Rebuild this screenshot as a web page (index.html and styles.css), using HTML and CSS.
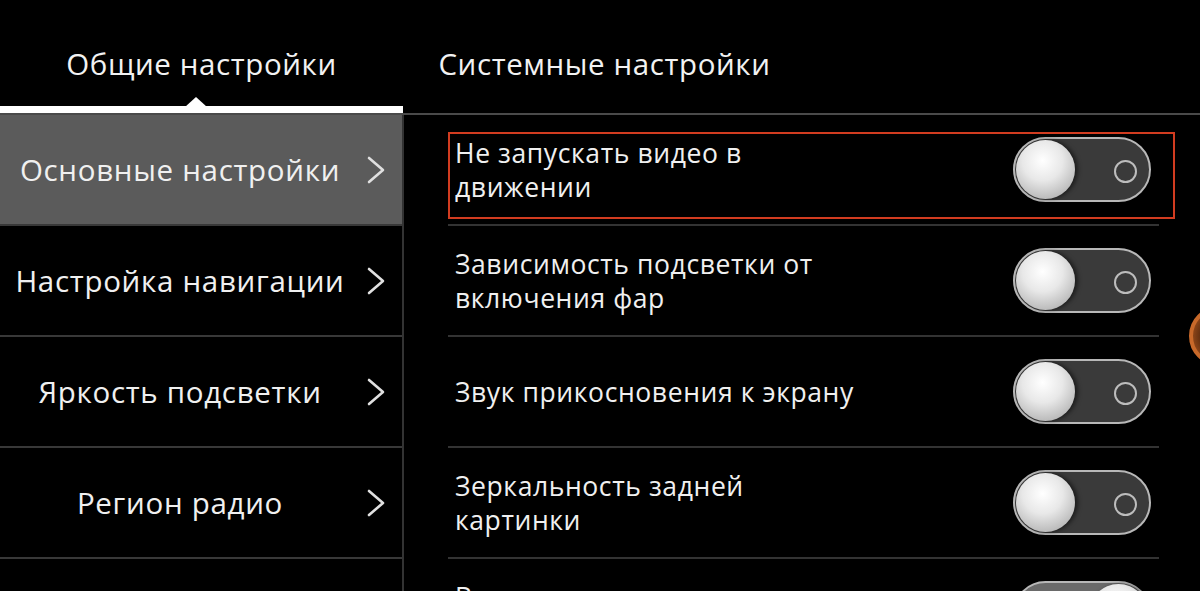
FILE: index.html
```html
<!DOCTYPE html>
<html lang="ru">
<head>
  <meta charset="UTF-8" />
  <title>Настройки</title>
  <link rel="stylesheet" href="styles.css">
</head>
<body>

<div class="app">
  <header class="tabs">
    <div class="tab active">Общие настройки</div>
    <div class="tab">Системные настройки</div>
  </header>

  <div class="content">
    <nav class="menu">
      <div class="menu-item selected">
        <span class="label">Основные настройки</span>
        <svg class="chev" viewBox="0 0 20 30"><polyline points="3,3 17,15 3,27" /></svg>
      </div>
      <div class="menu-item">
        <span class="label">Настройка навигации</span>
        <svg class="chev" viewBox="0 0 20 30"><polyline points="3,3 17,15 3,27" /></svg>
      </div>
      <div class="menu-item">
        <span class="label">Яркость подсветки</span>
        <svg class="chev" viewBox="0 0 20 30"><polyline points="3,3 17,15 3,27" /></svg>
      </div>
      <div class="menu-item">
        <span class="label">Регион радио</span>
        <svg class="chev" viewBox="0 0 20 30"><polyline points="3,3 17,15 3,27" /></svg>
      </div>
      <div class="menu-item"></div>
    </nav>

    <section class="options">
      <div class="option focused">
        <div class="option-text">Не запускать видео в<br>движении</div>
        <span class="toggle"></span>
      </div>
      <div class="option">
        <div class="option-text">Зависимость подсветки от<br>включения фар</div>
        <span class="toggle"></span>
      </div>
      <div class="option">
        <div class="option-text">Звук прикосновения к экрану</div>
        <span class="toggle"></span>
      </div>
      <div class="option">
        <div class="option-text">Зеркальность задней<br>картинки</div>
        <span class="toggle"></span>
      </div>
      <div class="option">
        <div class="option-text">Включать камеру заднего<br>вида</div>
        <span class="toggle on"></span>
      </div>
    </section>
  </div>

  <div class="float-btn"></div>
</div>

</body>
</html>
```

FILE: styles.css
```css
* { box-sizing: border-box; }
body {
  margin: 0;
  background: #000;
  color: #f0f0f0;
  font-family: 'Open Sans', 'Noto Sans', sans-serif;
  overflow: hidden;
}

.app {
  position: relative;
  width: 1200px;
  height: 591px;
  overflow: hidden;
}

.tabs {
  display: flex;
  height: 115px;
  border-bottom: 2px solid #4a4a4a;
}

.tab {
  position: relative;
  width: 403px;
  display: flex;
  align-items: center;
  justify-content: center;
  padding-top: 13px;
  font-size: 29.5px;
  letter-spacing: 0.6px;
  color: #f2f2f2;
}

.tab.active::after {
  content: '';
  position: absolute;
  left: 0;
  right: 0;
  bottom: 0;
  height: 7px;
  background: #fff;
}

.tab.active::before {
  content: '';
  position: absolute;
  left: 185px;
  bottom: 6px;
  border-left: 11px solid transparent;
  border-right: 11px solid transparent;
  border-bottom: 10px solid #fff;
}

.content {
  display: flex;
}

.menu {
  width: 404px;
  border-right: 2px solid #333;
}

.menu-item {
  display: flex;
  align-items: center;
  height: 111px;
  border-bottom: 2px solid #383838;
}

.menu-item.selected {
  background: #5b5b5b;
}

.menu-item .label {
  width: 360px;
  text-align: center;
  font-size: 29.5px;
  letter-spacing: 0.7px;
  color: #f0f0f0;
}

.chev {
  width: 20px;
  height: 30px;
  margin-left: 6px;
  fill: none;
  stroke: #e0e0e0;
  stroke-width: 2.6;
  stroke-linecap: round;
  stroke-linejoin: round;
}

.options {
  padding-left: 44px;
}

.option {
  position: relative;
  display: flex;
  align-items: center;
  justify-content: space-between;
  width: 711px;
  height: 111px;
  padding: 0 8px 0 7px;
  border-bottom: 2px solid #333;
}

.option.focused::after {
  content: '';
  position: absolute;
  left: 0;
  right: -16px;
  top: 17px;
  bottom: 5px;
  border: 2px solid #d23c20;
}

.option-text {
  font-size: 26.5px;
  line-height: 34px;
  letter-spacing: 0.6px;
  color: #f0f0f0;
}

.toggle {
  position: relative;
  flex: none;
  width: 138px;
  height: 65px;
  border: 2px solid #b8b8b8;
  border-radius: 33px;
  background: #3a3a3a;
}

.toggle::before {
  content: '';
  position: absolute;
  left: 1px;
  top: 1px;
  width: 59px;
  height: 59px;
  border-radius: 50%;
  background: radial-gradient(circle at 45% 35%, #ffffff 0%, #e8e8e8 40%, #b0b0b0 85%, #8a8a8a 100%);
  box-shadow: 3px 0 4px rgba(0, 0, 0, 0.5);
}

.toggle::after {
  content: '';
  position: absolute;
  right: 12px;
  top: 21px;
  width: 19px;
  height: 19px;
  border-radius: 50%;
  border: 2px solid #bdbdbd;
}

.toggle.on {
  background: #6a6a6a;
}

.toggle.on::before {
  left: auto;
  right: 1px;
}

.toggle.on::after {
  display: none;
}

.float-btn {
  position: absolute;
  left: 1189px;
  top: 306px;
  width: 60px;
  height: 60px;
  border-radius: 50%;
  border: 4px solid #c8692a;
  background: radial-gradient(circle, #3a1a08 30%, #8a4418 70%, #c8692a 100%);
}
```
